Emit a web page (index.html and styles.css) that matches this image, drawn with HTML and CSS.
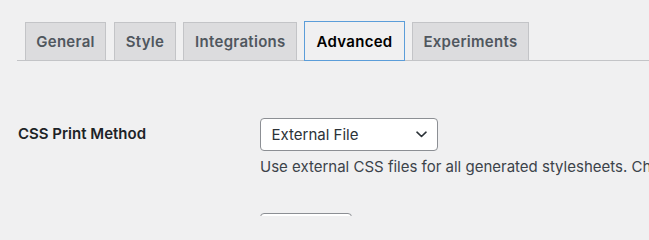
FILE: index.html
```html
<!DOCTYPE html>
<html lang="en">
<head>
<meta charset="utf-8">
<title>Settings</title>
<link rel="stylesheet" href="styles.css">
</head>
<body>
<div class="wrap">
  <nav class="tabs">
    <a class="tab">General</a>
    <a class="tab">Style</a>
    <a class="tab">Integrations</a>
    <a class="tab tab-active">Advanced</a>
    <a class="tab">Experiments</a>
  </nav>
  <div class="form">
    <div class="row">
      <div class="label">CSS Print Method</div>
      <div class="field">
        <div class="select">
          <span class="select-text">External File</span>
          <svg class="chevron" width="11" height="7" viewBox="0 0 11 7"><path d="M1 1.2 L5.5 5.5 L10 1.2" fill="none" stroke="#2c3338" stroke-width="1.6" stroke-linecap="round" stroke-linejoin="round"/></svg>
        </div>
        <p class="description">Use external CSS files for all generated stylesheets. Choose this setting for better performance (recommended).</p>
      </div>
    </div>
    <div class="row">
      <div class="label">&nbsp;</div>
      <div class="field">
        <div class="select select-small"><span class="select-text">&nbsp;</span></div>
      </div>
    </div>
  </div>
</div>
</body>
</html>
```

FILE: styles.css
```css
html, body {
  margin: 0;
  padding: 0;
  background: #f0f0f1;
}
body {
  height: 216px;
  overflow: hidden;
  font-family: Inter, "Noto Sans", sans-serif;
  font-size: 15px;
  color: #3c434a;
}
.wrap {
  padding-left: 17px;
}
.tabs {
  display: flex;
  align-items: flex-end;
  padding-top: 22px;
  border-bottom: 1px solid #c3c4c7;
  white-space: nowrap;
}
.tab {
  display: block;
  margin-left: 7.5px;
  padding: 6px 10.7px 5px;
  line-height: 26px;
  font-size: 15px;
  font-weight: 600;
  letter-spacing: 0.3px;
  color: #50575e;
  background: #dcdcde;
  border: 1px solid #c3c4c7;
  border-bottom: none;
  text-decoration: none;
}
.tab-active {
  background: #f0f0f1;
  color: #000;
  border-color: #f0f0f1;
  box-shadow: 0 0 0 1px #5b9dd9;
  position: relative;
}
.form {
  padding-left: 1px;
  padding-top: 57px;
}
.row {
  display: grid;
  grid-template-columns: 242px 1fr;
}
.row + .row {
  margin-top: 36px;
}
.label {
  font-weight: 600;
  color: #1d2327;
  line-height: 20px;
  padding-top: 6px;
}
.field {
  min-width: 0;
  overflow: hidden;
}
.select {
  box-sizing: border-box;
  width: 178px;
  height: 33px;
  display: flex;
  align-items: center;
  justify-content: space-between;
  padding: 0 10px 0 10.5px;
  background: #fff;
  border: 1px solid #8c8f94;
  border-radius: 4px;
  color: #2c3338;
  line-height: 20px;
}
.select-small {
  width: 92px;
}
.chevron {
  display: block;
}
.description {
  margin: 6px 0 0;
  line-height: 20px;
  white-space: nowrap;
  overflow: hidden;
  color: #3c434a;
}
```
